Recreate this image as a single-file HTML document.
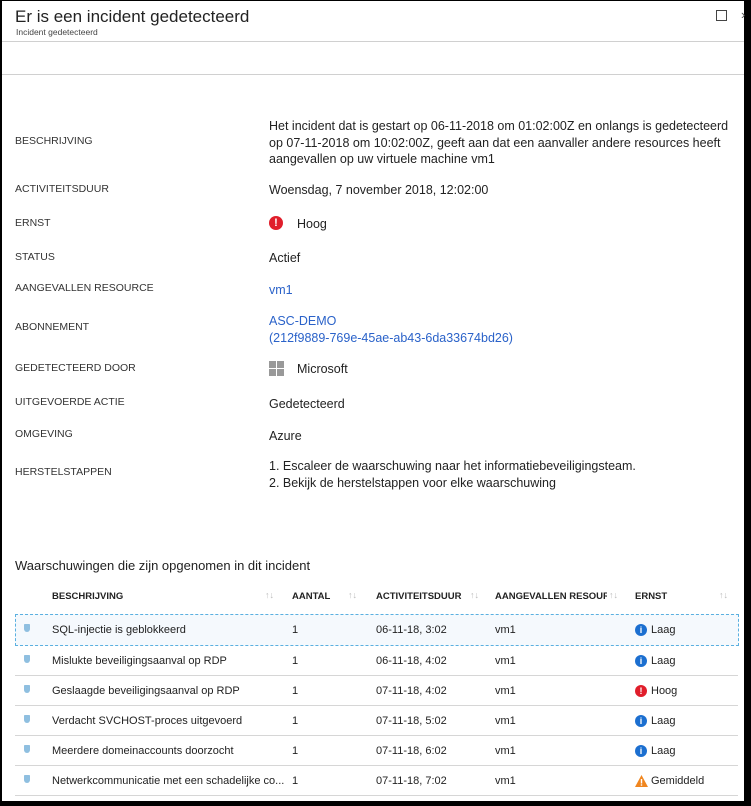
<!DOCTYPE html>
<html><head><meta charset="utf-8"><style>
body{margin:0;width:751px;height:806px;background:#000;position:relative;overflow:hidden;font-family:"Liberation Sans",sans-serif;color:#222}
#w{position:absolute;left:2px;top:1px;width:742px;height:800px;background:#fff}
.a{position:absolute;white-space:nowrap}
.l{font-size:10.5px;color:#333;left:13px}
.v{font-size:12.5px;left:267px;color:#222}
.blue{color:#2a62c9}
.h{font-size:9.5px;font-weight:bold;color:#222}
.t{font-size:11px;color:#222;top:9px}
.sep{position:absolute;left:15px;width:723px;height:1px;background:#d6d6d6}
.ar{font-size:9px;color:#bbb}
.r{position:absolute;left:2px;width:742px}
.sh{position:absolute;left:22px;top:9px;width:6px;height:8px;background:#8fbfe0;border-radius:1px 1px 4px 4px}
.ic{position:absolute;left:633px;top:9px;width:12px;height:12px;border-radius:50%;color:#fff;font-size:9px;font-weight:bold;text-align:center;line-height:12px}
</style></head><body><div id="w">
<div class="a" style="left:13px;top:6px;font-size:17px;color:#222">Er is een incident gedetecteerd</div>
<div class="a" style="left:14px;top:26px;font-size:8.5px;color:#444">Incident gedetecteerd</div>
<div class="a" style="left:714px;top:9px;width:9px;height:9px;border:1px solid #444"></div>
<div style="position:absolute;left:0;top:40px;width:742px;height:1px;background:#d0d0d0"></div>
<div style="position:absolute;left:0;top:73px;width:742px;height:1px;background:#d0d0d0"></div>

<div class="a l" style="top:134px">BESCHRIJVING</div>
<div class="a v" style="top:117px;line-height:16.5px">Het incident dat is gestart op 06-11-2018 om 01:02:00Z en onlangs is gedetecteerd<br>op 07-11-2018 om 10:02:00Z, geeft aan dat een aanvaller andere resources heeft<br>aangevallen op uw virtuele machine vm1</div>
<div class="a l" style="top:182px">ACTIVITEITSDUUR</div>
<div class="a v" style="top:182px">Woensdag, 7 november 2018, 12:02:00</div>
<div class="a l" style="top:216px">ERNST</div>
<div class="a" style="left:267px;top:215px;width:14px;height:14px;border-radius:50%;background:#e01e2b;color:#fff;font-size:11px;font-weight:bold;text-align:center;line-height:14px">!</div>
<div class="a v" style="left:295px;top:216px">Hoog</div>
<div class="a l" style="top:250px">STATUS</div>
<div class="a v" style="top:250px">Actief</div>
<div class="a l" style="top:281px">AANGEVALLEN RESOURCE</div>
<div class="a v blue" style="top:282px">vm1</div>
<div class="a l" style="top:320px">ABONNEMENT</div>
<div class="a v blue" style="top:312px;line-height:17px">ASC-DEMO<br>(212f9889-769e-45ae-ab43-6da33674bd26)</div>
<div class="a l" style="top:361px">GEDETECTEERD DOOR</div>
<svg class="a" style="left:267px;top:360px" width="15" height="15"><rect x="0" y="0" width="7" height="7" fill="#999"/><rect x="8" y="0" width="7" height="7" fill="#999"/><rect x="0" y="8" width="7" height="7" fill="#999"/><rect x="8" y="8" width="7" height="7" fill="#999"/></svg>
<div class="a v" style="left:295px;top:361px">Microsoft</div>
<div class="a l" style="top:395px">UITGEVOERDE ACTIE</div>
<div class="a v" style="top:396px">Gedetecteerd</div>
<div class="a l" style="top:427px">OMGEVING</div>
<div class="a v" style="top:428px">Azure</div>
<div class="a l" style="top:465px">HERSTELSTAPPEN</div>
<div class="a v" style="top:457px;line-height:17px">1. Escaleer de waarschuwing naar het informatiebeveiligingsteam.<br>2. Bekijk de herstelstappen voor elke waarschuwing</div>

<div class="a" style="left:13px;top:557px;font-size:13px">Waarschuwingen die zijn opgenomen in dit incident</div>
<div class="a h" style="left:50px;top:590px">BESCHRIJVING</div><div class="a ar" style="left:263px;top:589px">↑↓</div>
<div class="a h" style="left:290px;top:590px">AANTAL</div><div class="a ar" style="left:346px;top:589px">↑↓</div>
<div class="a h" style="left:374px;top:590px">ACTIVITEITSDUUR</div><div class="a ar" style="left:468px;top:589px">↑↓</div>
<div class="a h" style="left:493px;top:590px;width:112px;overflow:hidden">AANGEVALLEN RESOURCE</div><div class="a ar" style="left:607px;top:589px">↑↓</div>
<div class="a h" style="left:633px;top:590px">ERNST</div><div class="a ar" style="left:717px;top:589px">↑↓</div>
<div class="a" style="left:13px;top:613px;width:722px;height:30px;border:1px dashed #5ab0e0;background:#f5f9fd"></div>
</div>
<div class="a" style="left:741px;top:7px;font-size:13px;color:#555">›</div>

<div class="r" style="top:615px"><div class="sh"></div>
 <div class="a t" style="left:50px">SQL-injectie is geblokkeerd</div><div class="a t" style="left:290px">1</div><div class="a t" style="left:374px">06-11-18, 3:02</div><div class="a t" style="left:493px">vm1</div>
 <div class="ic" style="background:#1c6fd0">i</div><div class="a t" style="left:649px">Laag</div></div>
<div class="sep" style="top:675px"></div>
<div class="r" style="top:646px"><div class="sh"></div>
 <div class="a t" style="left:50px">Mislukte beveiligingsaanval op RDP</div><div class="a t" style="left:290px">1</div><div class="a t" style="left:374px">06-11-18, 4:02</div><div class="a t" style="left:493px">vm1</div>
 <div class="ic" style="background:#1c6fd0">i</div><div class="a t" style="left:649px">Laag</div></div>
<div class="sep" style="top:705px"></div>
<div class="r" style="top:676px"><div class="sh"></div>
 <div class="a t" style="left:50px">Geslaagde beveiligingsaanval op RDP</div><div class="a t" style="left:290px">1</div><div class="a t" style="left:374px">07-11-18, 4:02</div><div class="a t" style="left:493px">vm1</div>
 <div class="ic" style="background:#e01e2b">!</div><div class="a t" style="left:649px">Hoog</div></div>
<div class="sep" style="top:735px"></div>
<div class="r" style="top:706px"><div class="sh"></div>
 <div class="a t" style="left:50px">Verdacht SVCHOST-proces uitgevoerd</div><div class="a t" style="left:290px">1</div><div class="a t" style="left:374px">07-11-18, 5:02</div><div class="a t" style="left:493px">vm1</div>
 <div class="ic" style="background:#1c6fd0">i</div><div class="a t" style="left:649px">Laag</div></div>
<div class="sep" style="top:765px"></div>
<div class="r" style="top:736px"><div class="sh"></div>
 <div class="a t" style="left:50px">Meerdere domeinaccounts doorzocht</div><div class="a t" style="left:290px">1</div><div class="a t" style="left:374px">07-11-18, 6:02</div><div class="a t" style="left:493px">vm1</div>
 <div class="ic" style="background:#1c6fd0">i</div><div class="a t" style="left:649px">Laag</div></div>
<div class="sep" style="top:795px"></div>
<div class="r" style="top:766px"><div class="sh"></div>
 <div class="a t" style="left:50px;width:233px;overflow:hidden">Netwerkcommunicatie met een schadelijke co...</div><div class="a t" style="left:290px">1</div><div class="a t" style="left:374px">07-11-18, 7:02</div><div class="a t" style="left:493px">vm1</div>
 <svg class="a" style="left:633px;top:9px" width="13" height="12"><polygon points="6.5,0 13,12 0,12" fill="#f0861f"/><rect x="5.8" y="4" width="1.4" height="4.5" fill="#fff"/><rect x="5.8" y="9.3" width="1.4" height="1.4" fill="#fff"/></svg><div class="a t" style="left:649px">Gemiddeld</div></div>
</body></html>
